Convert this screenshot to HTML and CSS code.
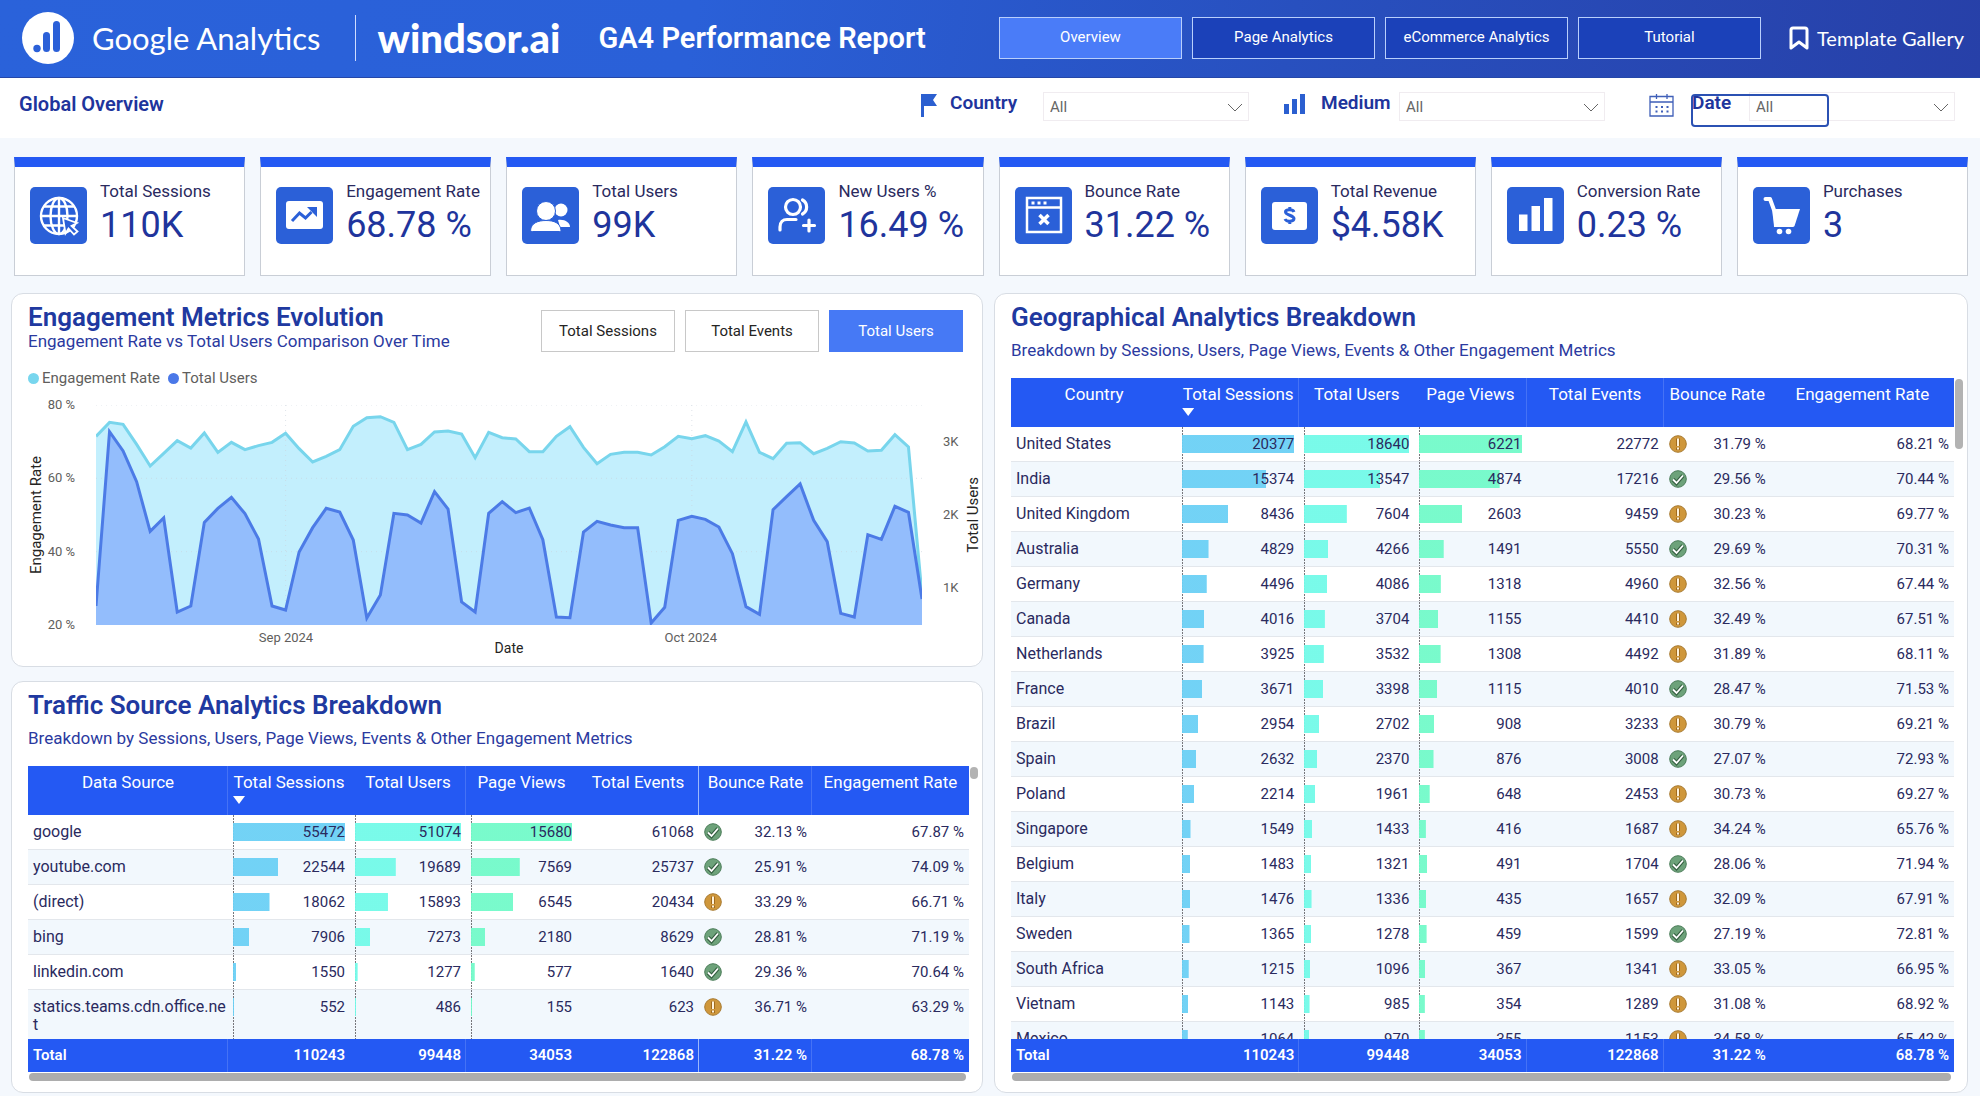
FILE: index.html
```html
<!DOCTYPE html>
<html lang="en">
<head>
<meta charset="utf-8">
<meta name="viewport" content="width=device-width, initial-scale=1">
<title>GA4 Performance Report</title>
<link rel="stylesheet" href="styles.css">
</head>
<body>
<header class="topbar">
  <svg class="ga-logo" viewBox="0 0 52 52" aria-hidden="true">
    <circle cx="26" cy="26" r="26" fill="#fff"/>
    <g fill="#2b60d8"><rect x="31" y="9" width="7" height="31" rx="3.5"/><rect x="21" y="20" width="7" height="20" rx="3.5"/><circle cx="15" cy="36.500" r="3.700"/></g>
  </svg>
  <span class="brand-ga">Google Analytics</span>
  <span class="brand-divider"></span>
  <span class="brand-windsor">windsor.ai</span>
  <h1 class="report-title">GA4 Performance Report</h1>
  <nav class="tabs">
    <button class="tab tab-active" type="button">Overview</button>
    <button class="tab" type="button">Page Analytics</button>
    <button class="tab" type="button">eCommerce Analytics</button>
    <button class="tab" type="button">Tutorial</button>
  </nav>
  <a class="gallery" href="#gallery">
    <svg width="20" height="24" viewBox="0 0 20 24" fill="none" stroke="#fff" stroke-width="3" stroke-linejoin="round" aria-hidden="true"><path d="M2 4q0-2 2-2h12q2 0 2 2v18l-8-6-8 6z"/></svg>
    Template Gallery
  </a>
</header>

<section class="filters">
  <h2 class="page-name">Global Overview</h2>
  <div class="filter filter-country">
    <svg class="filter-icon" width="16" height="23" viewBox="0 0 16 23" aria-hidden="true"><path fill="#2b5fd0" d="M0 0h16l-4 6 4 6H3v11H0z"/></svg>
    <label for="country">Country</label>
    <span class="picker"><select id="country"><option>All</option></select><svg viewBox="0 0 16 10"><path d="M1 1l7 7 7-7"/></svg></span>
  </div>
  <div class="filter filter-medium">
    <svg class="filter-icon" width="21" height="20" viewBox="0 0 21 20" aria-hidden="true"><path fill="#2b5fd0" d="M0 10h5v10H0zM8 5h5v15H8zM16 0h5v20h-5z"/></svg>
    <label for="medium">Medium</label>
    <span class="picker"><select id="medium"><option>All</option></select><svg viewBox="0 0 16 10"><path d="M1 1l7 7 7-7"/></svg></span>
  </div>
  <div class="filter filter-date">
    <svg class="filter-icon" width="25" height="23" viewBox="0 0 25 23" fill="none" stroke="#3f5fb8" stroke-width="1.300" aria-hidden="true"><path d="M1 2.500h23V22H1zM1 8h23M7.500 0v5M18 0v5"/><path stroke-width="2" stroke-dasharray="2 3.500" d="M6.500 13h13M6.500 17.500h13"/></svg>
    <label for="date">Date</label>
    <span class="picker"><select id="date"><option>All</option></select><svg viewBox="0 0 16 10"><path d="M1 1l7 7 7-7"/></svg></span>
    <span class="focus-ring"></span>
  </div>
</section>

<main>
  <section class="cards">
    <article class="card">
      <svg class="card-icon" viewBox="0 0 57 57" aria-hidden="true"><g fill="none" stroke="#fff" stroke-width="2.400"><circle cx="29" cy="29" r="18"/><ellipse cx="29" cy="29" rx="8.500" ry="18"/><path d="M29 11v36M11 29h36M14 19.500h30M14 38.500h30"/></g><path d="M33 31l14 5-5.500 3 6 5.500-3.500 3-5.500-6-3 5z" fill="#2b60d8" stroke="#fff" stroke-width="1.800"/></svg>
      <div><h3>Total Sessions</h3><p>110K</p></div>
    </article>
    <article class="card">
      <svg class="card-icon" viewBox="0 0 57 57" aria-hidden="true"><rect x="10" y="14" width="37" height="28" rx="3" fill="#fff"/><path d="M16 34l7.500-8 6 5 6-6" fill="none" stroke="#2b60d8" stroke-width="3"/><path d="M31 20h10v10z" fill="#2b60d8"/></svg>
      <div><h3>Engagement Rate</h3><p>68.78 %</p></div>
    </article>
    <article class="card">
      <svg class="card-icon" viewBox="0 0 57 57" aria-hidden="true"><g fill="#fff"><circle cx="39" cy="23" r="6.500"/><path d="M36 33c7-1 12 3 12 7H38z"/><circle cx="24" cy="24" r="9.500" stroke="#2b60d8"/><path d="M8.500 43.500C9 36 16 33.500 24 33.500S38.500 36 39 43.500q0 1-1.500 1h-27q-2 0-2-1z" stroke="#2b60d8"/></g></svg>
      <div><h3>Total Users</h3><p>99K</p></div>
    </article>
    <article class="card">
      <svg class="card-icon" viewBox="0 0 57 57" fill="none" stroke="#fff" stroke-width="3.200" stroke-linecap="round" aria-hidden="true"><circle cx="25" cy="20" r="7.500"/><path d="M34.500 13a8 8 0 0 1 0 14M12 43v-3c0-5 3-7.500 7-7.500h9M41 33v11M35.500 38.500h11"/></svg>
      <div><h3>New Users %</h3><p>16.49 %</p></div>
    </article>
    <article class="card">
      <svg class="card-icon" viewBox="0 0 57 57" fill="none" stroke="#fff" stroke-width="2.500" aria-hidden="true"><path d="M12 11h34v34H12zM12 20.500h34"/><path d="M16.500 16h16" stroke-width="3" stroke-dasharray="3 3"/><path d="M24.500 28l9 9M33.500 28l-9 9" stroke-width="3.500"/></svg>
      <div><h3>Bounce Rate</h3><p>31.22 %</p></div>
    </article>
    <article class="card">
      <svg class="card-icon" viewBox="0 0 57 57" aria-hidden="true"><rect x="11" y="15" width="35" height="28" rx="3" fill="#fff"/><path d="M33 25c-1-3-8.500-3-8.500 0s8.500 3.500 8.500 6.500-7.500 4-9 .5M28.800 20v3M28.800 34v3" fill="none" stroke="#2b60d8" stroke-width="3"/></svg>
      <div><h3>Total Revenue</h3><p>$4.58K</p></div>
    </article>
    <article class="card">
      <svg class="card-icon" viewBox="0 0 57 57" aria-hidden="true"><path fill="#fff" d="M12 27.500h8.500V44H12zM24.500 19H33v25h-8.500zM37 11h8.500v33H37z"/></svg>
      <div><h3>Conversion Rate</h3><p>0.23 %</p></div>
    </article>
    <article class="card">
      <svg class="card-icon" viewBox="0 0 57 57" fill="#fff" aria-hidden="true"><path d="M12.500 12h4.500l4 11 2 14" fill="none" stroke="#fff" stroke-width="4" stroke-linecap="round" stroke-linejoin="round"/><path d="M20 22h27l-5.500 17q-.5 1-2 1H21z"/><circle cx="26.500" cy="44.500" r="2.800"/><circle cx="35.500" cy="44.500" r="2.800"/></svg>
      <div><h3>Purchases</h3><p>3</p></div>
    </article>
  </section>

  <div class="board">
    <div class="board-left">
      <section class="panel panel-chart">
        <div class="chart-head">
          <div>
            <h2>Engagement Metrics Evolution</h2>
            <p class="subtitle">Engagement Rate vs Total Users Comparison Over Time</p>
          </div>
          <div class="switch">
            <button type="button">Total Sessions</button>
            <button type="button">Total Events</button>
            <button type="button" class="on">Total Users</button>
          </div>
        </div>
        <div class="legend"><span class="key key-rate">Engagement Rate</span><span class="key key-users">Total Users</span></div>
        <div class="chart">
          <span class="axis-title">Engagement Rate</span>
          <div class="ticks ticks-left"><span>80 %</span><span>60 %</span><span>40 %</span><span>20 %</span></div>
          <svg class="plot" viewBox="0 0 61 660" preserveAspectRatio="none" role="img" aria-label="Engagement rate and total users by day">
            <path class="area-rate" d="M0 660L0 94 1 52 2 58 3 118 4 183 5 145 6 107 7 129 8 84 9 142 10 112 11 134 12 122 13 112 14 85 15 131 16 171 17 154 18 134 19 64 20 38 21 35 22 52 23 134 24 118 25 81 26 78 27 87 28 158 29 82 30 98 31 102 32 140 33 140 34 94 35 65 36 127 37 176 38 148 39 142 40 142 41 150 42 125 43 94 44 101 45 92 46 108 47 140 48 51 49 142 50 161 51 115 52 113 53 146 54 130 55 110 56 114 57 138 58 136 59 89 60 126 61 570 61 660z"/>
            <g class="grid"><path d="M0 0H61M0 220H61M0 440H61M14 0V660M44 0V660"/></g>
            <polyline class="line-rate" points="0 94 1 52 2 58 3 118 4 183 5 145 6 107 7 129 8 84 9 142 10 112 11 134 12 122 13 112 14 85 15 131 16 171 17 154 18 134 19 64 20 38 21 35 22 52 23 134 24 118 25 81 26 78 27 87 28 158 29 82 30 98 31 102 32 140 33 140 34 94 35 65 36 127 37 176 38 148 39 142 40 142 41 150 42 125 43 94 44 101 45 92 46 108 47 140 48 51 49 142 50 161 51 115 52 113 53 146 54 130 55 110 56 114 57 138 58 136 59 89 60 126 61 570"/>
            <path class="area-users" d="M0 660L0 603 1 80 2 138 3 230 4 379 5 339 6 621 7 603 8 352 9 310 10 277 11 326 12 402 13 603 14 615 15 441 16 368 17 310 18 321 19 405 20 639 21 570 22 325 23 330 24 354 25 260 26 312 27 591 28 621 29 325 30 290 31 323 32 309 33 404 34 636 35 638 36 381 37 349 38 360 39 368 40 368 41 654 42 607 43 346 44 334 45 343 46 366 47 446 48 605 49 628 50 314 51 275 52 237 53 346 54 410 55 625 56 636 57 389 58 403 59 304 60 322 61 582 61 660z"/>
            <polyline class="line-users" points="0 603 1 80 2 138 3 230 4 379 5 339 6 621 7 603 8 352 9 310 10 277 11 326 12 402 13 603 14 615 15 441 16 368 17 310 18 321 19 405 20 639 21 570 22 325 23 330 24 354 25 260 26 312 27 591 28 621 29 325 30 290 31 323 32 309 33 404 34 636 35 638 36 381 37 349 38 360 39 368 40 368 41 654 42 607 43 346 44 334 45 343 46 366 47 446 48 605 49 628 50 314 51 275 52 237 53 346 54 410 55 625 56 636 57 389 58 403 59 304 60 322 61 582"/>
          </svg>
          <div class="ticks ticks-right"><span>3K</span><span>2K</span><span>1K</span></div>
          <span class="axis-title">Total Users</span>
          <div class="months"><span>Sep 2024</span><span>Oct 2024</span></div>
          <span class="date-title">Date</span>
        </div>
      </section>

      <section class="panel panel-table">
        <h2>Traffic Source Analytics Breakdown</h2>
        <p class="subtitle">Breakdown by Sessions, Users, Page Views, Events &amp; Other Engagement Metrics</p>
        <div class="table-frame">
          <div class="table-scroll">
            <table class="data traffic" data-rows="traffic">
              <thead><tr><th scope="col">Data Source</th><th scope="col">Total Sessions<i class="sort"></i></th><th scope="col">Total Users</th><th scope="col">Page Views</th><th scope="col">Total Events</th><th scope="col">Bounce Rate</th><th scope="col">Engagement Rate</th></tr></thead>
              <tbody></tbody>
              <tfoot><tr><td>Total</td><td>110243</td><td>99448</td><td>34053</td><td>122868</td><td>31.22 %</td><td>68.78 %</td></tr></tfoot>
            </table>
          </div>
          <i class="thumb-y thumb-short"></i>
        </div>
        <i class="thumb-x"></i>
      </section>
    </div>

    <section class="panel panel-table">
      <h2>Geographical Analytics Breakdown</h2>
      <p class="subtitle">Breakdown by Sessions, Users, Page Views, Events &amp; Other Engagement Metrics</p>
      <div class="table-frame">
        <div class="table-scroll">
          <table class="data geo" data-rows="geo">
            <thead><tr><th scope="col">Country</th><th scope="col">Total Sessions<i class="sort"></i></th><th scope="col">Total Users</th><th scope="col">Page Views</th><th scope="col">Total Events</th><th scope="col">Bounce Rate</th><th scope="col">Engagement Rate</th></tr></thead>
            <tbody></tbody>
            <tfoot><tr><td>Total</td><td>110243</td><td>99448</td><td>34053</td><td>122868</td><td>31.22 %</td><td>68.78 %</td></tr></tfoot>
          </table>
        </div>
        <i class="thumb-y"></i>
      </div>
      <i class="thumb-x"></i>
    </section>
  </div>
</main>
<script src="tables.js"></script>
</body>
</html>
```
FILE: styles.css
```css
* { box-sizing: border-box; }
body {
  margin: 0;
  height: 100vh;
  min-height: 900px;
  display: flex;
  flex-direction: column;
  background: #f4f8fd;
  color: #2a2a5e;
  font-family: Roboto, "Liberation Sans", sans-serif;
  font-size: 16px;
}
h1, h2, h3, p { margin: 0; }
button, select { font: inherit; }

/* Top bar */
.topbar {
  display: flex;
  align-items: center;
  height: 78px;
  flex: none;
  padding: 0 16px 2px 22px;
  background: linear-gradient(100deg, #2a62da 0%, #2a60d8 35%, #2850bf 65%, #2740a8 100%);
  border-bottom: 1px solid #2547a8;
  color: #fff;
  white-space: nowrap;
}
.ga-logo { width: 52px; height: 52px; margin-right: 18px; }
.brand-ga { font-family: Lato, sans-serif; font-size: 31px; }
.brand-divider { width: 1px; height: 46px; margin: 0 22px 0 34px; background: #cfdcff; }
.brand-windsor { font-family: Lato, sans-serif; font-weight: 900; font-size: 40px; }
.report-title { margin-left: 38px; font-size: 29px; font-weight: 600; line-height: 40px; }
.tabs { display: flex; gap: 10px; margin-left: auto; }
.tab {
  width: 183px;
  height: 42px;
  padding: 0 0 2px;
  border: 1px solid #b9cffc;
  background: #1b41b9;
  color: #fff;
  font-size: 15px;
}
.tab-active { background: #4a7cf8; }
.gallery {
  display: flex;
  align-items: center;
  gap: 8px;
  margin-left: 28px;
  color: #fff;
  font-family: Lato, sans-serif;
  font-size: 20px;
  text-decoration: none;
}

/* Filter row */
.filters {
  display: flex;
  flex: none;
  align-items: flex-start;
  height: 60px;
  padding: 14px 25px 0 19px;
  background: #fff;
  color: #20349c;
}
.page-name { margin-right: auto; font-size: 20px; font-weight: 600; line-height: 24px; }
.filter { position: relative; display: flex; align-items: flex-start; }
.filter label { font-size: 19px; font-weight: 600; line-height: 22px; }
.filter-icon { margin-top: 2px; }
.filter-country label { width: 93px; margin-left: 13px; }
.filter-medium { margin-left: 35px; }
.filter-medium label { width: 78px; margin-left: 16px; }
.filter-date { margin-left: 44px; }
.filter-date label { width: 57px; margin-left: 18px; }
.picker { position: relative; }
.picker select {
  display: block;
  width: 206px;
  height: 29px;
  padding: 0 6px;
  border: 1px solid #f0ecf0;
  border-radius: 0;
  background: #fff;
  color: #666;
  font-size: 15px;
  appearance: none;
}
.picker svg {
  position: absolute;
  right: 6px;
  top: 11px;
  width: 16px;
  height: 10px;
  fill: none;
  stroke: #666;
  pointer-events: none;
}
.focus-ring {
  position: absolute;
  left: 42px;
  top: 2px;
  width: 138px;
  height: 33px;
  border: 2px solid #2b51b3;
  border-radius: 4px;
  pointer-events: none;
}

/* Cards */
main {
  flex: 1;
  min-height: 0;
  display: flex;
  flex-direction: column;
  gap: 17px;
  padding: 19px 12px 3px 11px;
}
.cards { display: grid; grid-template-columns: repeat(8, 1fr); gap: 15px; padding-left: 3px; }
.card {
  display: flex;
  align-items: flex-start;
  gap: 13px;
  height: 119px;
  padding: 14px 0 0 15px;
  border: 1px solid #c9ced6;
  border-top: 10px solid #2459f3;
  background: #fff;
  white-space: nowrap;
}
.card-icon { flex: none; width: 57px; height: 57px; margin-top: 6px; border-radius: 5px; background: #2b60d8; }
.card h3 { font-size: 17px; font-weight: 400; line-height: 20px; }
.card p { margin-top: 4px; color: #20349c; font-size: 36px; line-height: 40px; }

/* Panels */
.board { flex: 1; min-height: 0; display: grid; grid-template-columns: 972fr 974fr; gap: 11px; }
.board-left { display: flex; flex-direction: column; gap: 14px; min-height: 0; min-width: 0; }
.panel { min-width: 0; border: 1px solid #d8dde4; border-radius: 12px; background: #fff; }
.panel h2 { color: #2039a0; font-size: 26px; font-weight: 600; line-height: 28px; }
.subtitle { color: #2b3aa0; font-size: 17px; line-height: 20px; }
.panel-chart { padding: 9px 2px 17px 16px; }
.chart-head { display: flex; justify-content: space-between; margin-right: 17px; }
.switch { display: flex; gap: 10px; margin-top: 7px; }
.switch button {
  width: 134px;
  height: 42px;
  border: 1px solid #c8c8c8;
  background: #fff;
  color: #252423;
  font-size: 15px;
}
.switch .on { border-color: #4679f5; background: #4679f5; color: #fff; }
.legend { display: flex; gap: 8px; margin-top: 18px; color: #605e5c; font-size: 15px; line-height: 16px; }
.key { display: flex; align-items: center; gap: 3px; }
.key::before { content: ""; width: 11px; height: 11px; border-radius: 50%; background: #78d6ee; }
.key-users::before { background: #4a78e8; }
.chart {
  display: grid;
  grid-template-columns: 16px 31px 1fr 23px 14px;
  grid-template-rows: 220px 12px 12px;
  margin-top: 19px;
  font-size: 13px;
}
.axis-title {
  justify-self: center;
  align-self: center;
  writing-mode: vertical-rl;
  rotate: 180deg;
  color: #252423;
  font-size: 15px;
  line-height: 16px;
  white-space: nowrap;
}
.ticks { display: flex; flex-direction: column; justify-content: space-between; color: #605e5c; line-height: 14px; white-space: nowrap; }
.ticks-left { margin: -7px 0; text-align: right; }
.ticks-right { margin: 30px 0; }
.plot { width: calc(100% - 42px); height: 220px; margin: 0 21px; }
.plot path, .plot polyline { vector-effect: non-scaling-stroke; }
.grid path { fill: none; stroke: #c9d2dc; stroke-opacity: 0.6; stroke-dasharray: 1 4; }
.area-rate { fill: #c3effd; }
.line-rate { fill: none; stroke: #78d5ec; stroke-width: 3; }
.area-users { fill: #93bdfc; }
.line-users { fill: none; stroke: #4c7be6; stroke-width: 3; }
.months { grid-column: 3; display: flex; margin-top: 7px; padding: 0 21px; color: #605e5c; line-height: 12px; }
.months span { width: 46%; text-align: center; }
.months span:last-child { width: 52%; }
.date-title { grid-column: 3; margin-top: 5px; color: #252423; font-size: 14px; line-height: 12px; text-align: center; }

/* Data tables */
.panel-table { flex: 1; min-height: 0; display: flex; flex-direction: column; padding: 9px 4px 11px 16px; }
.panel-table .subtitle { margin-top: 9px; }
.table-frame { flex: 1 1 0; min-height: 0; display: flex; gap: 1px; margin-top: 18px; }
.table-scroll { flex: 1; overflow: auto; scrollbar-width: none; }
.thumb-y { flex: none; width: 8px; height: 70px; margin-top: 1px; border-radius: 4px; background: #b3b3b3; }
.thumb-short { height: 12px; }
.thumb-x { height: 8px; margin: 1px 12px 0 1px; border-radius: 4px; background: #adadad; }
.data { width: 100%; table-layout: fixed; border-collapse: separate; border-spacing: 0; font-size: 15px; }
.data th {
  position: sticky;
  top: 0;
  z-index: 1;
  height: 49px;
  padding: 6px 0 0;
  background: #2459f3;
  color: #fff;
  font-size: 17px;
  font-weight: 400;
  line-height: 20px;
  vertical-align: top;
  white-space: nowrap;
}
.sort {
  display: block;
  width: 12px;
  height: 8px;
  margin: 4px 0 0 5px;
  background: #fff;
  clip-path: polygon(0 0, 100% 0, 50% 100%);
}
.data td { padding: 8px 5px; line-height: 18px; text-align: right; vertical-align: top; }
.data tbody td { border-bottom: 1px solid #e3e7ec; }
.data tbody tr:nth-child(even) { background: #f2f8fd; }
.data td:first-child { padding-right: 0; text-align: left; word-break: break-all; }
.data tbody td:first-child { font-size: 16px; }
.data tfoot td {
  position: sticky;
  bottom: 0;
  height: 33px;
  padding: 7px 5px 8px;
  background: #2459f3;
  color: #fff;
  font-weight: 600;
}
.traffic th:nth-child(1), .traffic th:nth-child(3), .traffic th:nth-child(5), .traffic th:nth-child(6),
.traffic tfoot td:nth-child(1), .traffic tfoot td:nth-child(3), .traffic tfoot td:nth-child(5), .traffic tfoot td:nth-child(6),
.geo th:nth-child(2), .geo th:nth-child(4), .geo th:nth-child(5),
.geo tfoot td:nth-child(2), .geo tfoot td:nth-child(4), .geo tfoot td:nth-child(5) {
  box-shadow: inset -1px 0 #4572f5;
}
.traffic th:nth-child(5), .traffic tfoot td:nth-child(5) { box-shadow: inset -1px 0 #9db8fb; }
.traffic th:nth-child(1) { width: 200px; }
.traffic th:nth-child(2) { width: 122px; }
.traffic th:nth-child(3) { width: 116px; }
.traffic th:nth-child(4) { width: 111px; }
.traffic th:nth-child(5) { width: 122px; }
.traffic th:nth-child(6) { width: 113px; }
.traffic th:nth-child(7) { width: 157px; }
.geo th:nth-child(1) { width: 166px; }
.geo th:nth-child(2) { width: 122px; }
.geo th:nth-child(3) { width: 115px; }
.geo th:nth-child(4) { width: 112px; }
.geo th:nth-child(5) { width: 137px; }
.geo th:nth-child(6) { width: 107px; }
.geo th:nth-child(7) { width: 183px; }
.data .axis {
  background: repeating-linear-gradient(#77777c 0 2px, transparent 2px 3px) 5px 0 / 1px 100% no-repeat;
}
.meter { background: linear-gradient(var(--bar), var(--bar)) 0 0 / var(--share) 100% no-repeat; }
.meter-sessions { --bar: #6bd0f5f2; }
.meter-users { --bar: #72fae8f2; }
.meter-views { --bar: #72fac9f2; }
.rated { display: flex; justify-content: space-between; }
.rated svg { width: 18px; height: 18px; }
```
FILE: tables.js
```js
// name, sessions, users, page views, events, bounce rate, engagement rate, status
const data = {
  traffic: [
    ["google", 55472, 51074, 15680, 61068, "32.13", "67.87", "ok"],
    ["youtube.com", 22544, 19689, 7569, 25737, "25.91", "74.09", "ok"],
    ["(direct)", 18062, 15893, 6545, 20434, "33.29", "66.71", "warn"],
    ["bing", 7906, 7273, 2180, 8629, "28.81", "71.19", "ok"],
    ["linkedin.com", 1550, 1277, 577, 1640, "29.36", "70.64", "ok"],
    ["statics.teams.cdn.office.net", 552, 486, 155, 623, "36.71", "63.29", "warn"]
  ],
  geo: [
    ["United States", 20377, 18640, 6221, 22772, "31.79", "68.21", "warn"],
    ["India", 15374, 13547, 4874, 17216, "29.56", "70.44", "ok"],
    ["United Kingdom", 8436, 7604, 2603, 9459, "30.23", "69.77", "warn"],
    ["Australia", 4829, 4266, 1491, 5550, "29.69", "70.31", "ok"],
    ["Germany", 4496, 4086, 1318, 4960, "32.56", "67.44", "warn"],
    ["Canada", 4016, 3704, 1155, 4410, "32.49", "67.51", "warn"],
    ["Netherlands", 3925, 3532, 1308, 4492, "31.89", "68.11", "warn"],
    ["France", 3671, 3398, 1115, 4010, "28.47", "71.53", "ok"],
    ["Brazil", 2954, 2702, 908, 3233, "30.79", "69.21", "warn"],
    ["Spain", 2632, 2370, 876, 3008, "27.07", "72.93", "ok"],
    ["Poland", 2214, 1961, 648, 2453, "30.73", "69.27", "warn"],
    ["Singapore", 1549, 1433, 416, 1687, "34.24", "65.76", "warn"],
    ["Belgium", 1483, 1321, 491, 1704, "28.06", "71.94", "ok"],
    ["Italy", 1476, 1336, 435, 1657, "32.09", "67.91", "warn"],
    ["Sweden", 1365, 1278, 459, 1599, "27.19", "72.81", "ok"],
    ["South Africa", 1215, 1096, 367, 1341, "33.05", "66.95", "warn"],
    ["Vietnam", 1143, 985, 354, 1289, "31.08", "68.92", "warn"],
    ["Mexico", 1064, 970, 355, 1153, "34.58", "65.42", "warn"]
  ]
};

const icons = {
  ok: '<svg viewBox="0 0 18 18" role="img" aria-label="Good"><circle cx="9" cy="9" r="8.300" fill="#6da27a" stroke="#4b7d59"/><path d="M4 9.500l3.500 3.500 6.500-7.500" fill="none" stroke="#355f41" stroke-width="4"/><path d="M4 9.500l3.500 3.500 6.500-7.500" fill="none" stroke="#fff" stroke-width="1.800"/></svg>',
  warn: '<svg viewBox="0 0 18 18" role="img" aria-label="Attention"><circle cx="9" cy="9" r="8.300" fill="#cf973b" stroke="#a87a30"/><path d="M9 3.500v7.500M9 12.500v2.500" stroke="#a06a1c" stroke-width="4"/><path d="M9 3.500v7.500M9 12.500v2" stroke="#fff3dc" stroke-width="2"/></svg>'
};

const meters = ["sessions", "users", "views"];

document.querySelectorAll("table[data-rows]").forEach((table) => {
  const rows = data[table.dataset.rows];
  const bars = (row) => meters.map((kind, i) => {
    const share = (100 * row[i + 1] / rows[0][i + 1]).toFixed(1);
    return `<td class="axis"><div class="meter meter-${kind}" style="--share: ${share}%">${row[i + 1]}</div></td>`;
  }).join("");
  table.tBodies[0].innerHTML = rows.map((row) =>
    `<tr><td>${row[0]}</td>${bars(row)}<td>${row[4]}</td>` +
    `<td><div class="rated">${icons[row[7]]}<span>${row[5]} %</span></div></td><td>${row[6]} %</td></tr>`
  ).join("");
});
```
